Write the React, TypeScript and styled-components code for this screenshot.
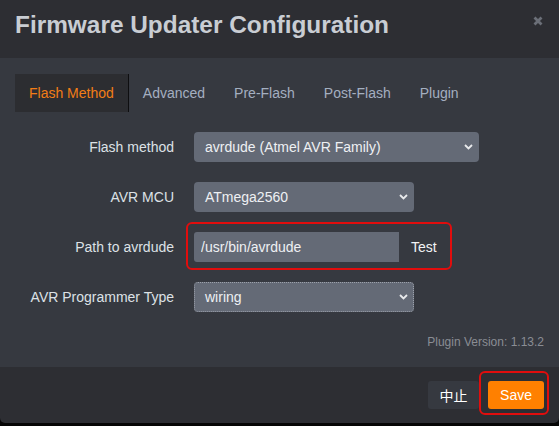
import styled, { createGlobalStyle } from 'styled-components'

const GlobalStyle = createGlobalStyle`
  html, body {
    margin: 0;
    padding: 0;
    background: #050505;
  }
  body {
    font-family: "Liberation Sans", Arial, sans-serif;
    width: 559px;
    height: 426px;
    overflow: hidden;
  }
`

const Modal = styled.div`
  width: 559px;
  border-radius: 0 0 5px 5px;
  overflow: hidden;
`

const Header = styled.div`
  height: 58px;
  box-sizing: border-box;
  padding: 10px 16px 0 15px;
  background: #2d2e33;
  display: flex;
  justify-content: space-between;
  align-items: flex-start;
`

const Title = styled.h3`
  margin: 0;
  font-size: 24.4px;
  line-height: 30px;
  font-weight: bold;
  color: #c9cdd3;
`

const Close = styled.button`
  margin-top: 6px;
  padding: 0;
  border: 0;
  background: none;
  width: 10px;
  height: 10px;
  display: flex;
`

const Body = styled.div`
  background: #363940;
  padding: 16px 15px 18px;
`

const Tabs = styled.div`
  display: flex;
  height: 38px;
`

const Tab = styled.div<{ $active?: boolean }>`
  display: flex;
  align-items: center;
  padding: 0 14px;
  font-size: 14px;
  color: ${(p) => (p.$active ? '#f27d16' : '#a4afc0')};
  background: ${(p) => (p.$active ? '#2c2d31' : 'transparent')};
  border-right: 1px solid ${(p) => (p.$active ? '#0e0e10' : 'transparent')};
`

const Form = styled.div`
  margin-top: 20px;
  display: grid;
  grid-template-columns: 159px auto;
  column-gap: 20px;
  row-gap: 20px;
  align-items: center;
  justify-items: start;
`

const Label = styled.label`
  justify-self: end;
  font-size: 14px;
  color: #dde1e6;
`

const Select = styled.div<{ $width: number; $focused?: boolean }>`
  position: relative;
  box-sizing: border-box;
  width: ${(p) => p.$width}px;
  height: 30px;
  padding: 0 10px;
  display: flex;
  align-items: center;
  justify-content: space-between;
  background: #646a76;
  border-radius: 4px;
  border: 1px ${(p) => (p.$focused ? 'dotted #9ca1ab' : 'solid transparent')};
  font-size: 14px;
  color: #eef0f3;
  > svg {
    margin-right: -5px;
  }
`

const InputGroup = styled.div`
  position: relative;
  display: flex;
  align-items: center;
  height: 30px;
  &::after {
    content: '';
    position: absolute;
    top: -10px;
    bottom: -8px;
    left: -8px;
    right: -3px;
    border: 2px solid #e10d0d;
    border-radius: 6px;
    pointer-events: none;
  }
`

const TextInput = styled.input`
  box-sizing: border-box;
  width: 205px;
  height: 30px;
  padding: 0 7px;
  border: 0;
  border-radius: 3px 0 0 3px;
  background: #646a76;
  color: #eef0f3;
  font-family: inherit;
  font-size: 14px;
  outline: none;
`

const AddonButton = styled.button`
  height: 30px;
  padding: 0 12px;
  border: 0;
  background: transparent;
  color: #f2f3f5;
  font-family: inherit;
  font-size: 14px;
`

const Version = styled.div`
  margin-top: 23px;
  text-align: right;
  font-size: 12px;
  line-height: 14px;
  color: #8a8d94;
`

const Footer = styled.div`
  background: #2d2e33;
  height: 56px;
  box-sizing: border-box;
  padding: 14px 15px 0;
  display: flex;
  justify-content: flex-end;
  align-items: flex-start;
  gap: 9px;
`

const Button = styled.button<{ $primary?: boolean }>`
  position: relative;
  height: 28px;
  padding: 0 ${(p) => (p.$primary ? 12 : 11.5)}px;
  border: 0;
  border-radius: 3px;
  background: ${(p) => (p.$primary ? '#ff8000' : '#363940')};
  color: #ffffff;
  font-family: "Liberation Sans", Arial, "Noto Sans CJK SC", sans-serif;
  font-size: 14px;
  ${(p) =>
    p.$primary &&
    `
    &::after {
      content: '';
      position: absolute;
      top: -10px;
      bottom: -6px;
      left: -9px;
      right: -5px;
      border: 2px solid #e10d0d;
      border-radius: 6px;
      pointer-events: none;
    }
  `}
`

const Chevron = () => (
  <svg width="9" height="6" viewBox="0 0 9 6">
    <polyline points="1,1 4.5,4.5 8,1" fill="none" stroke="#e9eaec" strokeWidth="1.8" />
  </svg>
)

const CloseIcon = () => (
  <svg width="10" height="10" viewBox="0 0 10 10">
    <path d="M1.5 1.5 L8.5 8.5 M8.5 1.5 L1.5 8.5" stroke="#6b6f78" strokeWidth="2.8" />
  </svg>
)

const tabs = ['Flash Method', 'Advanced', 'Pre-Flash', 'Post-Flash', 'Plugin']

const App: React.FC = () => {
  return (
    <>
      <GlobalStyle />
      <Modal>
        <Header>
          <Title>Firmware Updater Configuration</Title>
          <Close aria-label="Close">
            <CloseIcon />
          </Close>
        </Header>

        <Body>
          <Tabs>
            {tabs.map((t, i) => (
              <Tab key={t} $active={i === 0}>
                {t}
              </Tab>
            ))}
          </Tabs>

          <Form>
            <Label>Flash method</Label>
            <Select $width={285}>
              avrdude (Atmel AVR Family)
              <Chevron />
            </Select>

            <Label>AVR MCU</Label>
            <Select $width={220}>
              ATmega2560
              <Chevron />
            </Select>

            <Label>Path to avrdude</Label>
            <InputGroup>
              <TextInput defaultValue="/usr/bin/avrdude" />
              <AddonButton>Test</AddonButton>
            </InputGroup>

            <Label>AVR Programmer Type</Label>
            <Select $width={220} $focused>
              wiring
              <Chevron />
            </Select>
          </Form>

          <Version>Plugin Version: 1.13.2</Version>
        </Body>

        {/* Footer buttons */}
        <Footer>
          <Button>中止</Button>
          <Button $primary>Save</Button>
        </Footer>
      </Modal>
    </>
  )
}

export default App
